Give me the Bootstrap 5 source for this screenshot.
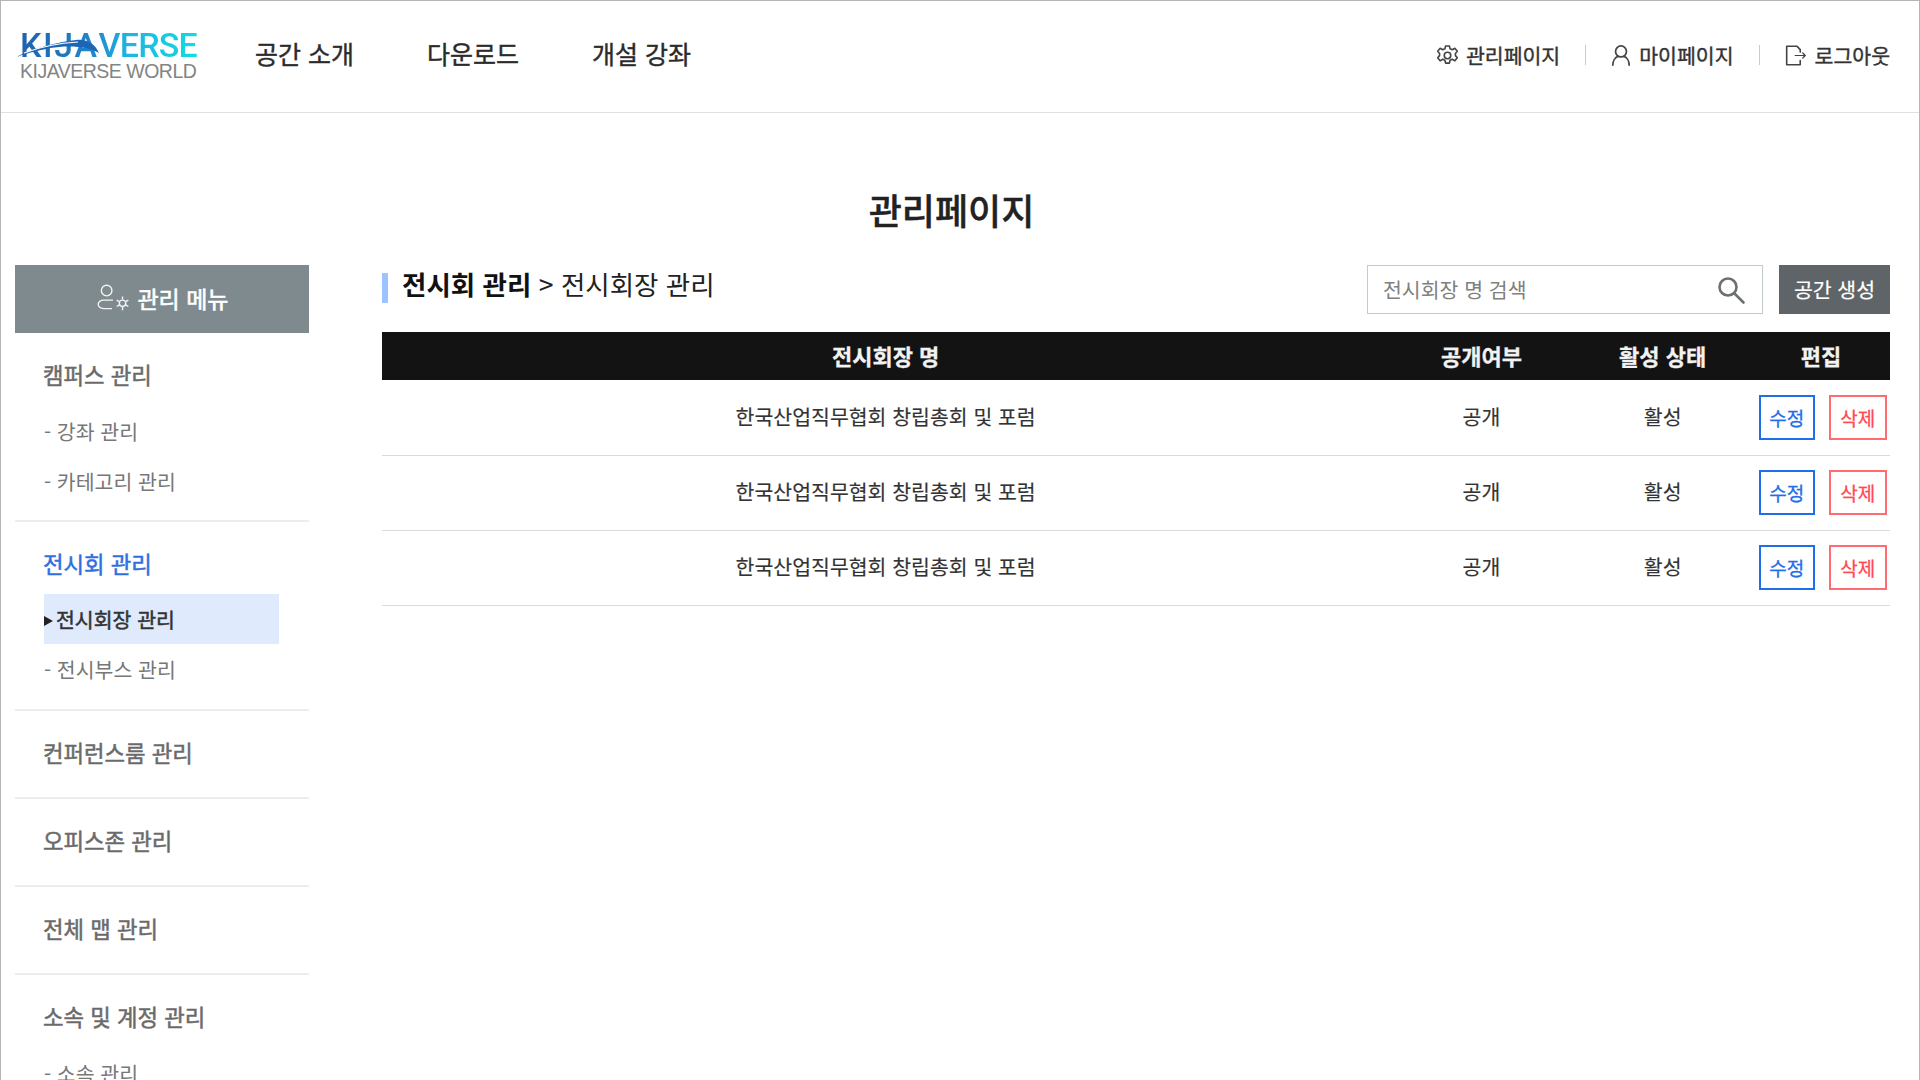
<!DOCTYPE html>
<html lang="ko">
<head>
    <meta charset="UTF-8">
    <meta name="viewport" content="width=device-width, initial-scale=1.0">
    <title>관리페이지</title>
    <link href="https://cdn.jsdelivr.net/npm/bootstrap@5.3.0/dist/css/bootstrap.min.css" rel="stylesheet">
    <style>
        html, body { height: 100%; overflow: hidden; }
        body {
            font-family: "Noto Sans CJK KR", "Noto Sans", sans-serif;
            color: #222;
            background: #fff;
        }
        .page-frame {
            height: 100vh;
            overflow: hidden;
            border-top: 1px solid #b5b5b5;
            border-left: 1px solid #b5b5b5;
            border-right: 1px solid #b5b5b5;
        }
        .site-header {
            height: 112px;
            padding: 0 29px 0 15px;
            border-bottom: 1px solid #dde0e0;
        }
        .logo-box { width: 182px; line-height: 1; margin: -3px 57px 0 0; position: relative; }
        .logo-top {
            font-family: Roboto, sans-serif;
            font-weight: 500;
            font-size: 34px;
            line-height: 31px;
            margin-left: 4px;
            white-space: nowrap;
            background: linear-gradient(90deg, #1f62ad 0%, #2087cb 42%, #1fb4e0 60%, #14dbe0 100%);
            -webkit-background-clip: text;
            background-clip: text;
            color: transparent;
        }
        .logo-top .logo-left { letter-spacing: 1.6px; }
        .logo-top .logo-right { letter-spacing: -.8px; }
        .logo-sub {
            font-family: "Liberation Sans", sans-serif;
            font-size: 19.5px;
            letter-spacing: -.5px;
            line-height: 20px;
            white-space: nowrap;
            color: #848484;
            margin-left: 4px;
        }
        .logo-swoosh { position: absolute; left: 0; top: 0; pointer-events: none; }
        .main-nav { gap: 73px; margin-top: -5px; }
        .main-nav a {
            font-size: 25px;
            -webkit-text-stroke: .4px #2b2b2b;
            color: #2b2b2b;
            text-decoration: none;
        }
        .user-nav { margin-top: -3px; }
        .user-nav a {
            font-size: 20.5px;
            -webkit-text-stroke: .4px #333;
            color: #333;
            text-decoration: none;
            gap: 8px;
        }
        .user-sep { width: 1px; height: 20px; background: #c8cccc; margin: 0 25px; }
        .page-title {
            font-size: 36px;
            font-weight: 500;
            -webkit-text-stroke: .4px #222;
            line-height: 50px;
            margin: 71px 0 31px;
            padding-right: 17px;
            color: #222;
        }
        .admin-body { padding: 0 29px 0 14px; gap: 73px; }
        .side-col { width: 294px; flex: none; }
        .side-head {
            height: 68px;
            padding-bottom: 2px;
            background: #7f8a8f;
            color: #fff;
            font-size: 23px;
            -webkit-text-stroke: .6px #fff;
            gap: 6px;
        }
        .side-group { padding: 17px 0 21px; border-bottom: 2px solid #eceeee; }
        .side-group.has-sub { padding-bottom: 14px; }
        .side-group.has-sub.shift-up .side-subs { margin-top: 7px; }
        .side-group.has-sub.shift-up { padding-bottom: 15px; }
        .side-group-plain { padding: 17px 0 12px; }
        .side-title {
            display: block;
            padding-left: 28px;
            font-size: 22.3px;
            -webkit-text-stroke: .5px #6a6a6a;
            line-height: 48px;
            color: #6a6a6a;
            text-decoration: none;
        }
        .side-title.on { color: #2f6fe0; -webkit-text-stroke: .5px #2f6fe0; }
        .side-subs { margin-top: 8px; }
        .side-sub {
            display: block;
            margin-left: 29px;
            width: 235px;
            height: 50px;
            line-height: 50px;
            font-size: 20.5px;
            color: #777;
            text-decoration: none;
        }
        .side-sub.on {
            background: #dfebfd;
            color: #333;
            -webkit-text-stroke: .5px #333;
        }
        .side-sub.on::before {
            content: "";
            display: inline-block;
            width: 0;
            height: 0;
            margin: 0 3px 2px 0;
            border-left: 9px solid #222;
            border-top: 5px solid transparent;
            border-bottom: 5px solid transparent;
        }
        .main-col { flex: 1; min-width: 0; }
        .crumb-row { height: 67px; }
        .crumb {
            border-left: 6px solid #9cc2ff;
            height: 30px;
            line-height: 22px;
            padding-left: 14px;
            font-size: 26.5px;
            margin-top: 8px;
        }
        .crumb strong { font-weight: 700; color: #111; }
        .search-box {
            width: 396px;
            height: 49px;
            border: 1px solid #c2cccc;
            border-radius: 0;
            padding: 0 16px 0 15px;
        }
        .search-box input {
            border: 0;
            outline: 0;
            padding: 0;
            flex: 1;
            font-size: 20.5px;
            color: #333;
            background: transparent;
            min-width: 0;
        }
        .search-box input::placeholder { color: #808080; }
        .make-btn {
            width: 111px;
            height: 49px;
            margin-left: 16px;
            background: #5f6468;
            border: 0;
            border-radius: 0;
            color: #fff;
            font-size: 20.5px;
            -webkit-text-stroke: .2px #fff;
            padding: 0;
        }
        .hall-table { table-layout: fixed; margin: 0; }
        .hall-table th {
            background: #131313;
            color: #f2f2f2;
            height: 48px;
            padding: 0 0 2px;
            font-size: 22px;
            -webkit-text-stroke: .3px #f2f2f2;
            text-align: center;
            vertical-align: middle;
            border: 0;
        }
        .hall-table td {
            height: 75px;
            padding: 0 0 2px;
            font-size: 20.5px;
            -webkit-text-stroke: .15px #333;
            color: #333;
            text-align: center;
            vertical-align: middle;
            border-bottom: 1px solid #d8dcdc;
        }
        .edit-btn, .del-btn {
            height: 45px;
            padding: 0;
            background: #fff;
            border-radius: 0;
            font-size: 19px;
            line-height: 1;
        }
        .edit-btn { width: 56px; border: 2px solid #1f6fe8; color: #1f6fe8; -webkit-text-stroke: .3px #1f6fe8; }
        .del-btn { width: 58px; border: 2px solid #ff6b70; color: #ff4a52; margin-left: 14px; -webkit-text-stroke: .3px #ff4a52; }
        .hall-table td.edit-cell { white-space: nowrap; padding: 0 0 0 7px; text-align: left; }
    </style>
</head>
<body>
<div class="page-frame">
    <header class="site-header d-flex align-items-center">
        <a href="#" class="logo-box d-block text-decoration-none">
            <div class="logo-top"><span class="logo-left">KIJA</span><span class="logo-right">VERSE</span></div>
            <div class="logo-sub">KIJAVERSE WORLD</div>
            <svg class="logo-swoosh" width="110" height="32" viewBox="0 0 110 32"><path d="M0 27 C16 19 40 12 60 10 C71 9 79 14 83 23 C72 16 52 15 34 18 C20 21 8 24 0 27Z" fill="#1c66b4"/><path d="M8 23 C24 17 44 13 62 12" fill="none" stroke="#fff" stroke-width="1.100"/></svg>
        </a>
        <nav class="main-nav d-flex">
            <a href="#">공간 소개</a>
            <a href="#">다운로드</a>
            <a href="#">개설 강좌</a>
        </nav>
        <div class="user-nav d-flex align-items-center ms-auto">
            <a href="#" class="d-flex align-items-center">
                <svg width="21" height="21" viewBox="1 1 22 22" fill="none" stroke="#444" stroke-width="1.700" stroke-linejoin="round"><circle cx="12" cy="12" r="3.400"/><path d="M10 2h4l.7 3 2.300 1 2.700-1.600 2.600 3.200-2 2.300v2.200l2 2.300-2.600 3.200-2.700-1.600-2.300 1-.7 3h-4l-.7-3-2.300-1-2.700 1.600-2.600-3.200 2-2.300v-2.200l-2-2.300 2.600-3.200L7 6l2.300-1z"/></svg>
                관리페이지
            </a>
            <span class="user-sep"></span>
            <a href="#" class="d-flex align-items-center">
                <svg width="20" height="21" viewBox="1 1 22 23" fill="none" stroke="#444" stroke-width="1.900" stroke-linecap="round"><circle cx="12" cy="8" r="6"/><path d="M3 23c0-5 3-8.500 5.500-9.500M21 23c0-5-3-8.500-5.500-9.500"/></svg>
                마이페이지
            </a>
            <span class="user-sep"></span>
            <a href="#" class="d-flex align-items-center">
                <svg width="22" height="21" viewBox="0 0 26 24" fill="none" stroke="#444" stroke-width="1.900" stroke-linecap="round" stroke-linejoin="round"><path d="M18 8V5l-4-4H2v22h16v-5"/><path d="M12 12h12M21 9l3 3-3 3" stroke-width="1.400"/></svg>
                로그아웃
            </a>
        </div>
    </header>

    <h2 class="page-title text-center">관리페이지</h2>

    <div class="admin-body d-flex align-items-start">
        <aside class="side-col">
            <div class="side-head d-flex align-items-center justify-content-center">
                <svg width="36" height="30" viewBox="0 0 34 28" fill="none" stroke="#f2f4f4" stroke-width="1.300"><circle cx="11" cy="7" r="5"/><path d="M17 16H8c-3 0-5 2-5 4s2 4 5 4h8"/><circle cx="26" cy="19" r="3"/><path d="M26 12.500v3M26 22.500v3M20.500 16l2.500 1.500M29 20.500l2.500 1.500M20.500 22l2.500-1.500M29 17.500l2.500-1.500"/></svg>
                관리 메뉴
            </div>
            <div class="side-group has-sub">
                <a href="#" class="side-title">캠퍼스 관리</a>
                <div class="side-subs">
                    <a href="#" class="side-sub">- 강좌 관리</a>
                    <a href="#" class="side-sub">- 카테고리 관리</a>
                </div>
            </div>
            <div class="side-group has-sub shift-up">
                <a href="#" class="side-title on">전시회 관리</a>
                <div class="side-subs">
                    <a href="#" class="side-sub on">전시회장 관리</a>
                    <a href="#" class="side-sub">- 전시부스 관리</a>
                </div>
            </div>
            <div class="side-group"><a href="#" class="side-title">컨퍼런스룸 관리</a></div>
            <div class="side-group"><a href="#" class="side-title">오피스존 관리</a></div>
            <div class="side-group"><a href="#" class="side-title">전체 맵 관리</a></div>
            <div class="side-group-plain">
                <a href="#" class="side-title">소속 및 계정 관리</a>
                <div class="side-subs">
                    <a href="#" class="side-sub">- 소속 관리</a>
                </div>
            </div>
        </aside>

        <main class="main-col">
            <div class="crumb-row d-flex align-items-start justify-content-between">
                <div class="crumb"><strong>전시회 관리</strong> &gt; 전시회장 관리</div>
                <div class="d-flex">
                    <div class="search-box d-flex align-items-center">
                        <input type="text" placeholder="전시회장 명 검색">
                        <svg width="30" height="30" viewBox="0 0 30 30" fill="none" stroke="#6a7070" stroke-width="2.600" stroke-linecap="round"><circle cx="12" cy="12" r="8.500"/><path d="M18.500 18.500l9 9"/></svg>
                    </div>
                    <button type="button" class="btn make-btn">공간 생성</button>
                </div>
            </div>
            <table class="table hall-table">
                <colgroup><col style="width:1006px"><col style="width:184px"><col style="width:178px"><col style="width:138px"></colgroup>
                <thead>
                    <tr><th>전시회장 명</th><th>공개여부</th><th>활성 상태</th><th>편집</th></tr>
                </thead>
                <tbody>
                    <tr>
                        <td>한국산업직무협회 창립총회 및 포럼</td><td>공개</td><td>활성</td>
                        <td class="edit-cell"><button type="button" class="btn edit-btn">수정</button><button type="button" class="btn del-btn">삭제</button></td>
                    </tr>
                    <tr>
                        <td>한국산업직무협회 창립총회 및 포럼</td><td>공개</td><td>활성</td>
                        <td class="edit-cell"><button type="button" class="btn edit-btn">수정</button><button type="button" class="btn del-btn">삭제</button></td>
                    </tr>
                    <tr>
                        <td>한국산업직무협회 창립총회 및 포럼</td><td>공개</td><td>활성</td>
                        <td class="edit-cell"><button type="button" class="btn edit-btn">수정</button><button type="button" class="btn del-btn">삭제</button></td>
                    </tr>
                </tbody>
            </table>
        </main>
    </div>
</div>
<script src="https://cdn.jsdelivr.net/npm/bootstrap@5.3.0/dist/js/bootstrap.bundle.min.js"></script>
</body>
</html>
